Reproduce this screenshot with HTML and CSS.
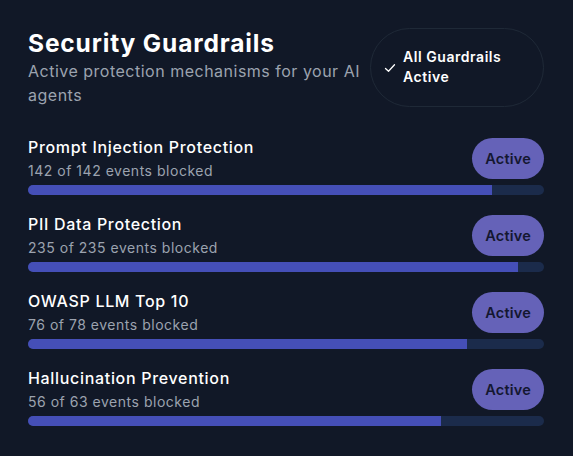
FILE: index.html
```html
<!DOCTYPE html>
<html>
<head>
<meta charset="utf-8">
<link rel="stylesheet" href="styles.css">
</head>
<body>
<div class="panel">
  <div class="header">
    <div class="heading">
      <h1 class="title">Security Guardrails</h1>
      <p class="subtitle">Active protection mechanisms for your AI agents</p>
    </div>
    <div class="status">
      <svg class="check" width="12" height="12" viewBox="0 0 12 12"><path d="M1.5 6.5 L4.5 9.2 L10.5 2.8" fill="none" stroke="#fff" stroke-width="1.3" stroke-linecap="round" stroke-linejoin="round"/></svg>
      <span class="status-text">All Guardrails Active</span>
    </div>
  </div>
  <div class="list">
    <div class="row">
      <div class="row-head">
        <div class="info">
          <div class="name">Prompt Injection Protection</div>
          <div class="count">142 of 142 events blocked</div>
        </div>
        <button class="pill">Active</button>
      </div>
      <div class="track"><div class="fill" style="width:90%"></div></div>
    </div>
    <div class="row">
      <div class="row-head">
        <div class="info">
          <div class="name">PII Data Protection</div>
          <div class="count">235 of 235 events blocked</div>
        </div>
        <button class="pill">Active</button>
      </div>
      <div class="track"><div class="fill" style="width:95%"></div></div>
    </div>
    <div class="row">
      <div class="row-head">
        <div class="info">
          <div class="name">OWASP LLM Top 10</div>
          <div class="count">76 of 78 events blocked</div>
        </div>
        <button class="pill">Active</button>
      </div>
      <div class="track"><div class="fill" style="width:85%"></div></div>
    </div>
    <div class="row">
      <div class="row-head">
        <div class="info">
          <div class="name">Hallucination Prevention</div>
          <div class="count">56 of 63 events blocked</div>
        </div>
        <button class="pill">Active</button>
      </div>
      <div class="track"><div class="fill" style="width:80%"></div></div>
    </div>
  </div>
</div>
</body>
</html>
```

FILE: styles.css
```css
html, body {
  margin: 0;
  padding: 0;
  background: #111827;
}
body {
  font-family: Inter, "Noto Sans", "Liberation Sans", sans-serif;
  color: #ffffff;
  width: 573px;
  height: 456px;
  overflow: hidden;
}
.panel {
  padding: 27px 29px 0 28px;
}
.header {
  display: flex;
  align-items: center;
  gap: 4px;
}
.heading {
  flex: 1;
  min-width: 0;
}
.title {
  margin: 0;
  font-size: 24.5px;
  line-height: 32px;
  font-weight: 700;
  letter-spacing: 0.85px;
}
.subtitle {
  margin: 0;
  font-size: 16px;
  line-height: 24px;
  color: #9ca3af;
  letter-spacing: 0.5px;
}
.status {
  flex-shrink: 0;
  width: 174px;
  height: 79px;
  box-sizing: border-box;
  border: 1px solid #1f2937;
  border-radius: 40px;
  display: flex;
  align-items: center;
  padding: 0 12px 0 13px;
  gap: 7px;
}
.check {
  flex-shrink: 0;
  margin-top: 1px;
}
.status-text {
  font-size: 14px;
  line-height: 20px;
  font-weight: 600;
  width: 118px;
  letter-spacing: 0.55px;
}
.list {
  margin-top: 28px;
  display: flex;
  flex-direction: column;
  gap: 17px;
}
.row-head {
  display: flex;
  align-items: center;
  justify-content: space-between;
}
.name {
  font-size: 16px;
  line-height: 24px;
  font-weight: 500;
  letter-spacing: 0.68px;
}
.count {
  margin-top: 2px;
  font-size: 14px;
  line-height: 20px;
  color: #9ca3af;
  letter-spacing: 0.52px;
}
.pill {
  font-family: inherit;
  border: none;
  background: #6562b8;
  color: #141730;
  font-size: 14.5px;
  font-weight: 600;
  letter-spacing: 0.2px;
  height: 41px;
  padding: 0 13px;
  border-radius: 21px;
  margin-top: 1px;
}
.track {
  margin-top: 4px;
  height: 10px;
  border-radius: 5px;
  background: #1b2b4b;
  overflow: hidden;
}
.fill {
  height: 100%;
  background: #454fb7;
}
```
